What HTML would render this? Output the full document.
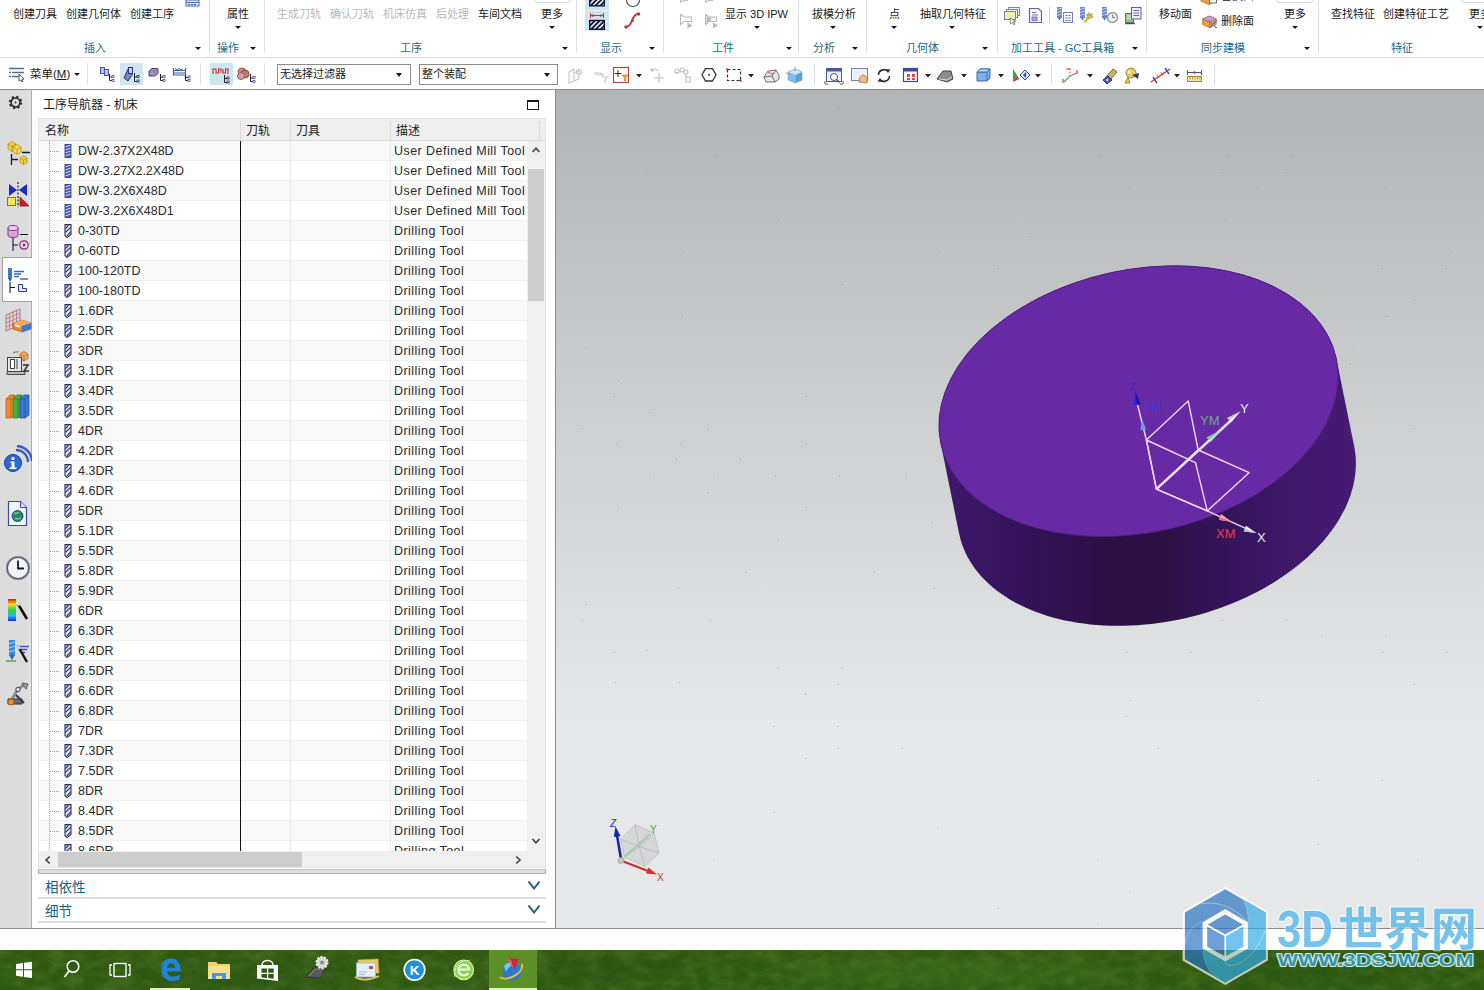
<!DOCTYPE html>
<html lang="zh-CN"><head><meta charset="utf-8"><title>NX - 工序导航器</title>
<style>
html,body{margin:0;padding:0}
body{width:1484px;height:990px;overflow:hidden;background:#fff;position:relative;font-family:"Liberation Sans","Noto Sans CJK SC",sans-serif;font-size:12px;color:#1a1a1a}
div,span,i{box-sizing:border-box}
.abs{position:absolute}
/* ribbon */
#ribbon{position:absolute;left:0;top:0;width:1484px;height:58px;background:#fff;border-bottom:1px solid #dcdcdc}
#ribbon .t{position:absolute;top:6px;font-size:11px;line-height:16px;white-space:nowrap;color:#1a1a1a}
#ribbon .t.dis{color:#b8b8b8}
#ribbon .g{position:absolute;top:40px;font-size:11px;line-height:16px;white-space:nowrap;color:#1b6a87}
#ribbon .sep{position:absolute;top:0;width:1px;height:53px;background:#dedede}
#ribbon .ar{position:absolute;width:0;height:0;border-left:3px solid transparent;border-right:3px solid transparent;border-top:3.5px solid #1a1a1a}
/* toolbar */
#tb{position:absolute;left:0;top:59px;width:1484px;height:30px;background:#fff}
#tb .t{position:absolute;font-size:11px;line-height:16px;white-space:nowrap}
#tb .box{position:absolute;top:5px;height:21px;border:1px solid #8c8c8c;background:#fff;font-size:11px;line-height:18px;padding-left:2px;white-space:nowrap}
#tb .ar{position:absolute;width:0;height:0;border-left:3.5px solid transparent;border-right:3.5px solid transparent;border-top:4px solid #1a1a1a}
#tb .sep{position:absolute;top:4px;width:1px;height:22px;background:#dedede}
#tb .hl{position:absolute;background:#cde6f0}
#tb svg{position:absolute}
#topline{position:absolute;left:0;top:89px;width:1484px;height:1px;background:#8e8e8e}
/* sidebar */
#side{position:absolute;left:0;top:90px;width:32px;height:838px;background:linear-gradient(90deg,#dcdcdc 0,#dcdcdc 26px,#e0e0e0 28px,#e0e0e0 31px);border-right:1px solid #adadad}
#side svg{position:absolute}
#side .act{position:absolute;left:2px;top:167px;width:30px;height:45px;background:#fff;border:1px solid #a0a0a0;border-right:none}
/* nav */
#nav{position:absolute;left:32px;top:90px;width:523px;height:838px;background:#fff}
#nav .ntitle{position:absolute;left:11px;top:7px;font-size:12px;line-height:16px;color:#1a1a1a}
#nav .nmax{position:absolute;left:495px;top:10px;width:12px;height:10px;border:1px solid #1a1a1a;border-top-width:2px}
#tbl{position:absolute;left:6px;top:28px;width:508px;height:750px;border:1px solid #e3e3e3;background:#fff;overflow:hidden}
.thead{position:absolute;left:0;top:0;width:506px;height:22px;background:#efefef;border-bottom:1px solid #dadada;font-size:12px;line-height:20px}
.thead span{position:absolute;top:2px;height:20px;border-left:1px solid #d9d9d9;padding-left:5px}
.thead .h1{left:0;width:201px;border-left:none;padding-left:6px}
.thead .h2{left:201px;width:50px}
.thead .h3{left:251px;width:100px}
.thead .h4{left:351px;width:150px;border-right:1px solid #d9d9d9}
.tbody{position:absolute;left:0;top:22px;width:488px;height:710px;overflow:hidden}
.row{position:relative;height:20px;width:488px;border-bottom:1px solid #efefef;font-size:12.5px;line-height:21px;white-space:nowrap;background:#fff;color:#2b2b2b}
.row.alt{background:#f9f9f9}
.row .dots{position:absolute;left:11px;top:10px;width:10px;height:1px;background-image:linear-gradient(90deg,#a0a0a0 1px,transparent 1px);background-size:2px 1px}
.row .ti{position:absolute;left:25px;top:3px;width:8px;height:14px}
.row .nm{position:absolute;left:39px;top:0}
.row .ds{position:absolute;left:355px;top:0;letter-spacing:0.45px}
.treeline{position:absolute;left:10px;top:0;width:1px;height:710px;background-image:linear-gradient(180deg,#a0a0a0 1px,transparent 1px);background-size:1px 2px}
.c1{position:absolute;left:200.5px;top:0;width:1.5px;height:710px;background:#111}
.c2{position:absolute;left:251px;top:0;width:1px;height:710px;background:#e9eaef}
.c3{position:absolute;left:351px;top:0;width:1px;height:710px;background:#e9eaef}
.vscroll{position:absolute;left:488px;top:22px;width:18px;height:710px;background:#f0f0f0}
.vscroll svg,.hscroll svg{position:absolute;width:10px;height:10px}
.vup svg{left:4px;top:4px}
.vdn svg{left:4px;top:695px}
.vthumb{position:absolute;left:1px;top:28px;width:16px;height:132px;background:#cdcdcd}
.hscroll{position:absolute;left:0;top:732px;width:506px;height:17px;background:#f0f0f0}
.hl svg{left:4px;top:4px}
.hr svg{left:474px;top:4px}
.hthumb{position:absolute;left:19px;top:1px;width:244px;height:15px;background:#cdcdcd}
.gbar{position:absolute;left:6px;top:779px;width:508px;height:5px;background:#dcdcdc;border:1px solid #b4b4b4;border-top-color:#c4c4c4}
.sec{position:absolute;left:6px;width:508px;height:24px;border-bottom:2px solid #dcdcdc;font-size:13.5px;line-height:25px;color:#17627a}
.sec span{position:absolute;left:7px;top:0}
.sec svg{position:absolute;left:489px;top:5px;width:14px;height:10px}
.s1{top:785px}.s2{top:809px}
/* viewport */
#vp{position:absolute;left:555px;top:90px;width:929px;height:839px;overflow:hidden;background:linear-gradient(180deg,#b3b4b6 0%,#e6e7e9 75.1%,#e6e7e9 100%)}
#vp svg{position:absolute;left:0;top:0}
#vpl{position:absolute;left:555px;top:90px;width:1px;height:839px;background:#8c8c8c}
#vpb{position:absolute;left:0;top:928px;width:1484px;height:1px;background:#8c8c8c}
/* bottom */
#strip{position:absolute;left:0;top:929px;width:1484px;height:21px;background:#fff}
#task{position:absolute;left:0;top:950px;width:1484px;height:40px;background:#2f5515;overflow:hidden}
#task svg{position:absolute}
#wm{position:absolute;left:0;top:0}

</style></head>
<body>
<svg width="0" height="0" style="position:absolute">
<defs>
<symbol id="icMill" viewBox="0 0 8 14"><rect x="1" y="0.5" width="6" height="13" fill="#4a5aa8"/><path d="M1 3 L7 1 M1 6 L7 4 M1 9 L7 7 M1 12 L7 10" stroke="#c8d0f0" stroke-width="1.1"/><rect x="1" y="0.5" width="6" height="13" fill="none" stroke="#2c3580" stroke-width="0.8"/></symbol>
<symbol id="icDrill" viewBox="0 0 8 14"><path d="M1 0.6 H7 V10.5 L3 13.6 L1 11.5 Z" fill="#e8ebf6" stroke="#2a2f55" stroke-width="1.1"/><path d="M1.2 8.5 L6.8 3.2 M1.2 4.8 L4.5 1.2 M3 12 L6.8 7.6" stroke="#3a4380" stroke-width="1.3"/></symbol>
</defs></svg>
<div id="ribbon">
  <span class="t" style="left:13px">创建刀具</span>
  <span class="t" style="left:66px">创建几何体</span>
  <span class="t" style="left:130px">创建工序</span>
  <svg class="abs" style="left:185px;top:0" width="16" height="8" viewBox="0 0 16 8"><rect x="1" y="0" width="13" height="6" fill="#dfeaf6" stroke="#3f6fb0" stroke-width="1"/><path d="M1 2.5 H14 M3 4.5 h2 m1 0 h2 m1 0 h2" stroke="#3f6fb0" stroke-width="1"/></svg>
  <div class="sep" style="left:209px"></div>
  <span class="t" style="left:227px">属性</span><i class="ar" style="left:235px;top:26px"></i>
  <div class="sep" style="left:264px"></div>
  <span class="t dis" style="left:277px">生成刀轨</span>
  <span class="t dis" style="left:330px">确认刀轨</span>
  <span class="t dis" style="left:383px">机床仿真</span>
  <span class="t dis" style="left:436px">后处理</span>
  <span class="t" style="left:478px">车间文档</span>
  <span class="t" style="left:541px">更多</span><i class="ar" style="left:549px;top:26px"></i>
  <div class="abs" style="left:534px;top:-6px;width:37px;height:9px;border:1px solid #d8d8d8;border-radius:3px"></div>
  <div class="sep" style="left:576px"></div>
  <!-- display icons -->
  <div class="abs" style="left:585px;top:-2px;width:24px;height:33px;background:#cfe6f1"></div>
  <div class="abs" style="left:585px;top:10px;width:24px;height:1px;background:#e8f3f8"></div>
  <svg class="abs" style="left:588px;top:0" width="18" height="30" viewBox="0 0 18 30">
    <defs><pattern id="hat" width="3.400" height="3.400" patternUnits="userSpaceOnUse" patternTransform="rotate(-45)"><rect width="3.400" height="3.400" fill="#15153a"/><rect width="3.400" height="1.500" fill="#fff"/></pattern></defs>
    <rect x="2" y="-1" width="14" height="6.500" fill="url(#hat)"/><rect x="1.700" y="-2" width="14.600" height="7.800" fill="none" stroke="#15153a" stroke-width="1.400"/>
    <rect x="2" y="20.500" width="14" height="8.500" fill="url(#hat)"/><rect x="1.700" y="20.500" width="14.600" height="8.800" fill="none" stroke="#15153a" stroke-width="1.400"/>
    <path d="M2.5 13 V18 M15.5 13 V18 M3 15.5 H15" stroke="#d03030" stroke-width="1" fill="none"/><path d="M3 15.5 l2.5 -1.8 v3.6z M15 15.5 l-2.5 -1.8 v3.6z" fill="#d03030"/>
  </svg>
  <svg class="abs" style="left:622px;top:-6px" width="22" height="40" viewBox="0 0 22 40">
    <circle cx="11" cy="6" r="6.5" fill="#fff" stroke="#555" stroke-width="1.2"/><path d="M11 6 L13 3" stroke="#555" stroke-width="1"/>
    <path d="M4 33 C11 33 9 20 16 20" fill="none" stroke="#c0393b" stroke-width="1.900"/><circle cx="4" cy="33" r="1.800" fill="#c0393b"/><circle cx="16.500" cy="20" r="1.800" fill="#c0393b"/><circle cx="10.500" cy="26.500" r="1.500" fill="#c0393b"/>
  </svg>
  <div class="sep" style="left:663px"></div>
  <svg class="abs" style="left:676px;top:0" width="46" height="30" viewBox="0 0 46 30">
    <g fill="none" stroke="#b9b9b9" stroke-width="1.100"><path d="M4.500 -3 V2 L8 0.500 H11.500 V-3"/><path d="M29.500 -3 V2 L33 0.500 H36.500 V-3"/>
    <path d="M4.500 14.500 L8 17 H15.500 V21.500 H8 L4.500 24.500 Z"/><path d="M12 23.500 l3.500 2 l-3.500 2z" fill="#b9b9b9"/>
    <path d="M29.500 14.500 L33 17 H40.500 V21.500 H33 L29.500 24.500 Z M31.500 17 V22 M34 17.500 V21"/><path d="M31 17.500 l4 1.800 l-4 1.800z" fill="#b9b9b9"/><path d="M37.500 23.500 l3.500 2 l-3.500 2z" fill="#b9b9b9"/></g>
  </svg>
  <span class="t" style="left:725px">显示 3D IPW</span><i class="ar" style="left:754px;top:26px"></i>
  <div class="sep" style="left:798px"></div>
  <span class="t" style="left:812px">拔模分析</span><i class="ar" style="left:830px;top:26px"></i>
  <div class="sep" style="left:866px"></div>
  <span class="t" style="left:889px">点</span><i class="ar" style="left:891px;top:26px"></i>
  <span class="t" style="left:920px">抽取几何特征</span><i class="ar" style="left:949px;top:26px"></i>
  <div class="sep" style="left:997px"></div>
  <!-- GC toolbox icons -->
  <svg class="abs" style="left:1002px;top:6px" width="142" height="22" viewBox="0 0 142 22">
    <g stroke="#7a80b0" stroke-width="1" fill="#f0f2fa"><rect x="6.500" y="1.500" width="11" height="8"/><rect x="4.500" y="3.500" width="11" height="8"/><rect x="2.500" y="5.500" width="11" height="8" fill="#f4ecb0"/><path d="M8 12 l0.500 6 l1.800 -1.800 l1.700 2.600 l1 -0.700 l-1.600 -2.500 l2.300 -0.300z" fill="#fff" stroke="#555" stroke-width="0.700"/></g>
    <g stroke="#6a62b0" stroke-width="1.200" fill="#f6f5fc"><path d="M27.500 2.500 h9 l3 3 v11 h-12z"/><path d="M30 6.500 h4 M30 9 h6" stroke-width="0.900"/><rect x="30" y="11" width="5" height="3.500" fill="#b0a8e0" stroke-width="0.800"/></g>
    <path d="M47.500 1 V18" stroke="#d4d4d4"/>
    <g><rect x="55" y="1" width="5" height="11" fill="#6f86c4"/><path d="M55 3.500 l5 -1.500 M55 6.500 l5 -1.500 M55 9.500 l5 -1.500" stroke="#c0d0f4" stroke-width="0.900"/><path d="M56 12 l1.500 2.500 l1.500 -2.500z" fill="#506aa8"/><rect x="61.500" y="6.500" width="9" height="10" fill="#f4f6fc" stroke="#7a80b0"/><path d="M63.500 9.500 h2 m1 0 h2 M63.500 12 h2 m1 0 h2 M63.500 14.500 h2 m1 0 h2" stroke="#6a70a8" stroke-width="1"/></g>
    <g><rect x="78" y="1" width="5" height="11" fill="#6f86c4"/><path d="M78 3.500 l5 -1.500 M78 6.500 l5 -1.500 M78 9.500 l5 -1.500" stroke="#c0d0f4" stroke-width="0.900"/><path d="M79 12 l1.500 2.500 l1.500 -2.500z" fill="#506aa8"/><path d="M83 15.500 l6.500 -7" stroke="#e0b84a" stroke-width="2.600" stroke-linecap="round"/><path d="M87 6.500 a3 3 0 1 0 4 4 l-2.500 -0.500 l-0.800 -2.500z" fill="#e8c860" stroke="#b08a20" stroke-width="0.600"/><path d="M84 9 h4 M85 11.500 h-1" stroke="#7a80b0" stroke-width="0.800"/></g>
    <g><rect x="100" y="1" width="5" height="11" fill="#6f86c4"/><path d="M100 3.500 l5 -1.500 M100 6.500 l5 -1.500 M100 9.500 l5 -1.500" stroke="#c0d0f4" stroke-width="0.900"/><path d="M101 12 l1.500 2.500 l1.500 -2.500z" fill="#506aa8"/><circle cx="110.500" cy="11.500" r="5" fill="#f0f0f0" stroke="#9a9a9a" stroke-width="1.500"/><path d="M110.500 8.500 v3 h2.500" stroke="#777" fill="none" stroke-width="1"/></g>
    <g><path d="M123.500 7.500 h8 v9 h-8z" fill="#9cc09c" stroke="#5a7a5a"/><path d="M125 10 h5 M125 12.500 h5" stroke="#e8f4e8"/><path d="M123 17.500 h10" stroke="#4a5a4a" stroke-width="1.400"/><rect x="129.500" y="1.500" width="9.500" height="11.500" fill="#eceffb" stroke="#5a60a8"/><path d="M131.500 4.500 h5.500 M131.500 7 h5.500 M131.500 9.500 h5.500" stroke="#5a60a8" stroke-width="0.900"/></g>
  </svg>
  <div class="sep" style="left:1146px"></div>
  <span class="t" style="left:1159px">移动面</span>
  <span class="t" style="left:1221px;top:-12px">替换面</span>
  <span class="t" style="left:1221px;top:13px">删除面</span>
  <svg class="abs" style="left:1199px;top:-8px" width="22" height="40" viewBox="0 0 22 40">
    <path d="M2 2 l8 -3 l8 3 v7 l-8 3.500 l-8 -3.500z" fill="#eaa040" stroke="#a86a18" stroke-width="0.800"/><path d="M2 2 l8 3.500 l8 -3.500" fill="none" stroke="#a86a18" stroke-width="0.800"/><rect x="10.500" y="5" width="7" height="6" fill="#f4f4f4" stroke="#666" stroke-width="0.900"/>
    <g transform="translate(1.500 4.500) scale(0.850)"><path d="M2.500 26.500 l8 -3.500 l8 3.500 v6.500 l-8 3.500 l-8 -3.500z" fill="#eaa040" stroke="#a86a18" stroke-width="0.800"/><path d="M2.500 26.500 l8 -3.500 l8 3.500 l-8 3.500z" fill="#c8a0d8" stroke="#8a5aa0" stroke-width="0.800"/><path d="M10.500 30 v6.500" stroke="#a86a18" stroke-width="0.800"/><path d="M10 28 l9 9 M19 28 l-8 9" stroke="#6a6a8a" stroke-width="1.500"/><path d="M11 28.500 l8 8" stroke="#e8e8f0" stroke-width="0.500"/></g>
  </svg>
  <span class="t" style="left:1284px">更多</span><i class="ar" style="left:1292px;top:26px"></i>
  <div class="abs" style="left:1276px;top:-6px;width:37px;height:9px;border:1px solid #d8d8d8;border-radius:3px"></div>
  <div class="sep" style="left:1318px"></div>
  <span class="t" style="left:1331px">查找特征</span>
  <span class="t" style="left:1383px">创建特征工艺</span>
  <span class="t" style="left:1469px">更多</span><i class="ar" style="left:1477px;top:26px"></i>
  <div class="abs" style="left:1461px;top:-6px;width:37px;height:9px;border:1px solid #d8d8d8;border-radius:3px"></div>
  <!-- group labels -->
  <span class="g" style="left:84px">插入</span><i class="ar" style="left:195px;top:47px"></i>
  <span class="g" style="left:217px">操作</span><i class="ar" style="left:250px;top:47px"></i>
  <span class="g" style="left:400px">工序</span><i class="ar" style="left:562px;top:47px"></i>
  <span class="g" style="left:600px">显示</span><i class="ar" style="left:649px;top:47px"></i>
  <span class="g" style="left:712px">工件</span><i class="ar" style="left:786px;top:47px"></i>
  <span class="g" style="left:813px">分析</span><i class="ar" style="left:852px;top:47px"></i>
  <span class="g" style="left:906px">几何体</span><i class="ar" style="left:982px;top:47px"></i>
  <span class="g" style="left:1011px">加工工具 - GC工具箱</span><i class="ar" style="left:1132px;top:47px"></i>
  <span class="g" style="left:1201px">同步建模</span><i class="ar" style="left:1304px;top:47px"></i>
  <span class="g" style="left:1391px">特征</span>
</div>
<div id="tb">
  <svg style="left:8px;top:7px" width="18" height="16" viewBox="0 0 18 16"><path d="M1 2.500 H16 M4 6.500 H16 M4 10.500 H13" stroke="#5a6a8a" stroke-width="1.4"/><path d="M1 6.500 h2 M1 10.500 h2" stroke="#5a6a8a" stroke-width="1.4"/><path d="M11 8 l5 5 l-2 0.500 l1 2 l-1.200 0.500 l-1 -2 l-1.800 1z" fill="#fff" stroke="#333" stroke-width="0.8"/></svg>
  <span class="t" style="left:30px;top:7px;font-size:11.500px">菜单(<u>M</u>)</span><i class="ar" style="left:74px;top:14px;border-left-width:3px;border-right-width:3px;border-top-width:3.500px"></i>
  <div class="sep" style="left:87px"></div>
  <div class="hl" style="left:120px;top:4px;width:23px;height:22px"></div>
  <div class="hl" style="left:210px;top:4px;width:23px;height:22px"></div>
  <svg style="left:97px;top:5px" width="100" height="22" viewBox="0 0 100 22">
    <g><rect x="3.500" y="3.500" width="4" height="6" fill="#b9c3ea" stroke="#4a57a0"/><rect x="7.500" y="5.500" width="4" height="6" fill="#b9c3ea" stroke="#4a57a0"/><path d="M12.500 10 V16.500 H15 M12.500 13 H15" stroke="#222" fill="none"/><rect x="15" y="11.500" width="2" height="2" fill="none" stroke="#4a57a0" stroke-width="0.800"/><rect x="15" y="15.500" width="2" height="2" fill="none" stroke="#4a57a0" stroke-width="0.800"/></g>
    <g><path d="M27 14 l4 -9 h4 v6 l-4 6z" fill="#7a86c8" stroke="#2a3070"/><rect x="31.500" y="3.500" width="4" height="6" fill="#c9cff0" stroke="#2a3070"/><path d="M37.500 9 V17.500 H40 M37.500 13 H40" stroke="#222" fill="none"/><rect x="40" y="11.500" width="2" height="2" fill="none" stroke="#2a3070" stroke-width="0.800"/><rect x="40" y="16" width="2" height="2" fill="none" stroke="#2a3070" stroke-width="0.800"/></g>
    <g><path d="M52 7 l3 -2.500 h6 v5 l-3 2.500 h-6z" fill="#8d9ad8" stroke="#6a3a5a"/><path d="M52 7 h6 l3 -2.500 M58 7 v5" stroke="#b06a7a" fill="none"/><path d="M63.500 10 V16.500 H66 M63.500 13 H66" stroke="#222" fill="none"/><rect x="66" y="11.500" width="2" height="2" fill="none" stroke="#4a57a0" stroke-width="0.800"/><rect x="66" y="15.500" width="2" height="2" fill="none" stroke="#4a57a0" stroke-width="0.800"/></g>
    <g><path d="M76.500 4 v7 h12 v-7 M76.500 6.500 h12 M76.500 9 h12" fill="none" stroke="#3f5fa8" stroke-width="1.200"/><path d="M78 4.500 l2 1.500 l2 -1.500 l2 1.500 l2 -1.500" stroke="#3f5fa8" fill="none"/><path d="M88.500 11 V16.500 H91 M88.500 13.500 H91" stroke="#222" fill="none"/><rect x="91" y="12" width="2" height="2" fill="none" stroke="#4a57a0" stroke-width="0.800"/><rect x="91" y="15.500" width="2" height="2" fill="none" stroke="#4a57a0" stroke-width="0.800"/></g>
  </svg>
  <div class="sep" style="left:200px"></div>
  <svg style="left:210px;top:5px" width="48" height="22" viewBox="0 0 48 22">
    <path d="M3 10 V5 H6 V9 H8.500 V5 H11 V9 M13 5 V9 H15.500 V5 H18 V10" fill="none" stroke="#c03030" stroke-width="1.100"/><path d="M14.500 11 V18.500 H17 M14.500 14.500 H17" stroke="#222" fill="none"/><rect x="17" y="13" width="2" height="2" fill="none" stroke="#2a3070" stroke-width="0.800"/><rect x="17" y="17" width="2" height="2" fill="none" stroke="#2a3070" stroke-width="0.800"/>
    <g><circle cx="32" cy="8" r="4" fill="#c98a8a" stroke="#9a5a5a"/><circle cx="35" cy="10" r="4" fill="#b97a7a" stroke="#8a4a4a"/><circle cx="31" cy="12" r="3.500" fill="#d4a0a0" stroke="#9a5a5a"/><path d="M40.500 10 V17.500 H43 M40.500 14 H43" stroke="#222" fill="none"/><rect x="43" y="12.500" width="2" height="2" fill="none" stroke="#4a57a0" stroke-width="0.800"/><rect x="43" y="16.500" width="2" height="2" fill="none" stroke="#4a57a0" stroke-width="0.800"/></g>
  </svg>
  <div class="sep" style="left:264px"></div>
  <div class="box" style="left:277px;width:134px">无选择过滤器</div><i class="ar" style="left:396px;top:14px"></i>
  <div class="box" style="left:419px;width:139px">整个装配</div><i class="ar" style="left:544px;top:14px"></i>
  <!-- selection icons -->
  <svg style="left:564px;top:5px" width="250" height="24" viewBox="0 0 250 24">
    <g fill="none" stroke="#c4c4c4" stroke-width="1.100"><path d="M5 8 l5 -3 v12 l-5 2z M10 9 l5 -2 v8 l-5 2"/><circle cx="15" cy="8" r="2.500"/></g>
    <g fill="none" stroke="#c4c4c4" stroke-width="1.100"><path d="M31 9 h6 l2 2 h-6z M38 13 h5 l-2 4 v2"/></g>
    <rect x="49.500" y="3.500" width="15" height="15" fill="#fff" stroke="#b04848" stroke-width="1.200"/><path d="M54 6 v7 M50.500 9.500 h7" stroke="#333" stroke-width="1"/><path d="M58 11 h6 l-2.300 3 v3 h-1.400 v-3z" fill="#f0a828" stroke="#c07a10" stroke-width="0.600"/>
    <path d="M72 10 l3 3.500 l3 -3.500z" fill="#222"/>
    <g fill="none" stroke="#bdbdbd" stroke-width="1.100"><path d="M87 7 a4 4 0 0 1 7 0 M87 7 l0 -3 M87 7 l3 0"/><path d="M95 9 v10 M90 14 h10"/></g>
    <g fill="none" stroke="#bdbdbd" stroke-width="1.100"><circle cx="113" cy="7" r="2"/><circle cx="118" cy="6" r="2"/><circle cx="122" cy="8" r="2"/><path d="M122 10 v8 M122 13 h4 v5 h-4"/></g>
    <path d="M138 10.800 L141.500 4.600 H148.500 L152 10.800 L148.500 17 H141.500 Z" fill="#fff" stroke="#333" stroke-width="1.300"/><circle cx="145" cy="10.800" r="1.100" fill="#b03030"/>
    <rect x="163.500" y="5.500" width="13" height="11" fill="none" stroke="#333" stroke-width="1.200" stroke-dasharray="3 2"/><circle cx="163.500" cy="5.500" r="1.200" fill="#b03030"/><circle cx="176.500" cy="16.500" r="1.200" fill="#b03030"/>
    <path d="M184 10 l3 3.500 l3 -3.500z" fill="#222"/>
    <g><path d="M200 13 l4 -6 l8 -1 l3 5 v4 l-4 3 h-9z" fill="#e6e6ee" stroke="#666" stroke-width="0.900"/><path d="M200 13 l8 -1 l3 6 M208 12 l4 -6" fill="none" stroke="#666" stroke-width="0.900"/><path d="M204 8.500 l6 1.500" stroke="#d06070" stroke-width="1"/></g>
    <g><path d="M224 8 l7 -3 l7 3 v8 l-7 3 l-7 -3z" fill="#7dbcf0" stroke="#6aa8e0" stroke-width="0.600"/><path d="M231 11 l7 -3 v8 l-7 3z" fill="#5a9fe0"/><path d="M224 8 l7 -3 l7 3 l-7 3z" fill="#cfe8fb" stroke="#8ac0f0" stroke-width="0.600"/><path d="M231 11 v8" stroke="#9fd0f8" stroke-width="0.600"/><path d="M231 3 v4 M222 9 l4 1" stroke="#d04040" stroke-width="0.800" stroke-dasharray="1.500 1"/></g>
  </svg>
  <div class="sep" style="left:814px"></div>
  <svg style="left:822px;top:5px" width="226" height="24" viewBox="0 0 226 24">
    <g><rect x="4.500" y="4.500" width="15" height="13" fill="#eef1fb" stroke="#4a57a0"/><rect x="4.500" y="4.500" width="15" height="3" fill="#4a57a0"/><circle cx="12" cy="13" r="3.500" fill="#fff" stroke="#555"/><path d="M14.500 15.500 l3 3" stroke="#555" stroke-width="1.500"/><path d="M3 17 v3 h3 M21 17 v3 h-3" stroke="#c03030" fill="none"/></g>
    <g><rect x="29.500" y="4.500" width="16" height="12" fill="#eef1fb" stroke="#7a7fa8"/><path d="M37 18 c0 -6 3 -7 4 -7 s3 1 4 3 v5z" fill="#e6c080" stroke="#a07a30" stroke-width="0.800"/></g>
    <g fill="none" stroke="#333" stroke-width="1.600"><path d="M56.500 11 a5.500 5.500 0 0 1 10 -3"/><path d="M67.500 12 a5.500 5.500 0 0 1 -10 3"/></g><path d="M64.500 5 l4 0.500 l-2.500 3.500z M59.500 18 l-4 -0.500 l2.500 -3.500z" fill="#333"/>
    <g><rect x="81.500" y="4.500" width="14" height="13" fill="#fff" stroke="#3a4a9a" stroke-width="1.200"/><rect x="81.500" y="4.500" width="14" height="3" fill="#3a4a9a"/><path d="M85 10 h3 v3 h-3z M90 10 h3 v3 h-3z M85 14 h3 v2 h-3z M90 14 h3 v2 h-3z" fill="#e04848"/></g>
    <path d="M103 10 l3 3.500 l3 -3.500z" fill="#222"/>
    <g><path d="M115 15 l6 -8 h8 l2 8 l-6 3z" fill="#8c8c8c" stroke="#444"/><path d="M117 15 l8 1 l5 -3" fill="none" stroke="#ddd"/></g>
    <path d="M139 10 l3 3.500 l3 -3.500z" fill="#222"/>
    <g><path d="M155 8 l3 -3 h10 v9 l-3 3 h-10z" fill="#7fb2ec" stroke="#3a6ab0"/><path d="M155 8 h10 v9 M165 8 l3 -3" fill="none" stroke="#3a6ab0"/><path d="M155 8 l3 -3 h10 l-3 3z" fill="#bcdcfa" stroke="#3a6ab0"/></g>
    <path d="M176 10 l3 3.500 l3 -3.500z" fill="#222"/>
    <g><path d="M191 5 l4 6 l-4 7z" fill="#38a048"/><path d="M191 18 l4 -7 l2 4z" fill="#d03838"/><path d="M198 11 l5 -5 l5 5 l-5 5z" fill="#dfe6f8" stroke="#3a4a9a"/><path d="M201 11 l3 -3 v6z" fill="#3a4a9a"/></g>
    <path d="M213 10 l3 3.500 l3 -3.500z" fill="#222"/>
  </svg>
  <div class="sep" style="left:1051px"></div>
  <svg style="left:1058px;top:5px" width="150" height="24" viewBox="0 0 150 24">
    <g fill="none" stroke-width="1.100"><path d="M12 4 v8" stroke="#d06060" stroke-dasharray="2 1.500"/><path d="M12 12 l7 -3" stroke="#d06060"/><path d="M12 12 l-6 6" stroke="#40a060"/><path d="M8 5 h4 M19 6 v4 M5 15 v4" stroke="#c04040"/></g>
    <path d="M29 10 l3 3.500 l3 -3.500z" fill="#222"/>
    <g><path d="M47 14 l8 -9 l4 3 l-8 9z" fill="#c8b46a" stroke="#7a6a2a"/><path d="M45 16 l5 -4 l4 4 l-5 4z" fill="#4a5ab0" stroke="#2a3070"/><path d="M48 16 l2 -1.500 v3z" fill="#fff"/></g>
    <g><circle cx="73" cy="9" r="5" fill="#e6c86a" stroke="#a88a2a"/><circle cx="71" cy="8" r="1.500" fill="#fff"/><path d="M70 13 l-3 6 h5z" fill="#e6c86a" stroke="#a88a2a"/><path d="M74 11 l7 -2 l-1 6z" fill="#3a3a6a"/></g>
    <g><path d="M93 18 L112 5" stroke="#d03a3a" stroke-width="1.300"/><path d="M95 13 l4 6 M107 4 l4 6" stroke="#3a4ab0" stroke-width="1.400"/><path d="M99 11 l2 3 M103 8.500 l2 3" stroke="#d03a3a"/></g>
    <path d="M116 10 l3 3.500 l3 -3.500z" fill="#222"/>
    <g><rect x="129.500" y="12.500" width="14" height="5" fill="#f6e6a8" stroke="#a88a2a"/><path d="M132 13 v2.500 M134.500 13 v2.500 M137 13 v2.500 M139.500 13 v2.500 M142 13 v2.500" stroke="#a88a2a" stroke-width="0.800"/><path d="M129.500 6 v5 M143.500 6 v5 M130 8.500 h13" stroke="#4a4a9a"/><circle cx="136.500" cy="8.500" r="1.200" fill="#c03030"/></g>
  </svg>
  <div class="sep" style="left:1214px"></div>
</div>
<div id="topline"></div>
<div id="side">
  <div class="act"></div>
  <!-- gear -->
  <svg style="left:7.500px;top:5px" width="15" height="15" viewBox="0 0 17 17"><circle cx="8.500" cy="8.500" r="5" fill="none" stroke="#222" stroke-width="1.700"/><circle cx="8.500" cy="8.500" r="6.600" fill="none" stroke="#222" stroke-width="2" stroke-dasharray="2.600 2.580"/><circle cx="8.500" cy="8.500" r="1" fill="#222"/></svg>
  <!-- yellow cubes -->
  <svg style="left:5px;top:49px" width="26" height="28" viewBox="0 0 26 28"><g stroke="#b08a10" stroke-width="0.700"><path d="M3 5 l4 -2.500 l4 2.500 v5 l-4 2.500 l-4 -2.500z" fill="#f2d23a"/><path d="M3 5 l4 2.500 l4 -2.500 M7 7.500 v5" fill="none"/><path d="M8 8 l4 -2.500 l4 2.500 v5 l-4 2.500 l-4 -2.500z" fill="#f6dc50"/><path d="M8 8 l4 2.500 l4 -2.500 M12 10.500 v5" fill="none"/><path d="M15 19 l3.500 -2 l3.500 2 v4.500 l-3.500 2 l-3.500 -2z" fill="#f2d23a"/><path d="M15 19 l3.500 2 l3.500 -2 M18.500 21 v4.500" fill="none"/></g><path d="M6.500 15 V26 M6.500 20.500 H13 M17 13.500 H25" fill="none" stroke="#1a1a1a" stroke-width="1.300"/></svg>
  <!-- bowtie -->
  <svg style="left:5px;top:91px" width="26" height="28" viewBox="0 0 26 28"><path d="M4 3 l8 6 l-8 6z M22 3 l-8 6 l8 6z" fill="#1a2ac8"/><path d="M13 1 V26" stroke="#222" stroke-width="1.200" stroke-dasharray="2 1.500"/><rect x="2.500" y="16.500" width="8" height="8" fill="#f6e65a" stroke="#8a7a10"/><path d="M15 16 l9 9 h-9z" fill="#d0202a" stroke="#801018" stroke-width="0.700"/></svg>
  <!-- pink cylinder -->
  <svg style="left:5px;top:133px" width="26" height="30" viewBox="0 0 26 30"><path d="M3 5 v7 a5 2.500 0 0 0 10 0 v-7" fill="#e6a0d8" stroke="#7a3a80"/><ellipse cx="8" cy="5" rx="5" ry="2.500" fill="#f4c8ec" stroke="#7a3a80"/><path d="M8 15 V28 M8 22 H13 M15 11.500 H23" stroke="#14143c" stroke-width="1.100" fill="none"/><circle cx="19" cy="22" r="4.200" fill="#f4d8ee" stroke="#8a2a6a" stroke-width="1.200"/><circle cx="19" cy="22" r="1.400" fill="#8a2a6a"/></svg>
  <!-- active: tool tree -->
  <svg style="left:5px;top:176px" width="26" height="30" viewBox="0 0 26 30"><rect x="3" y="2" width="4" height="10" fill="#3a7ad0"/><path d="M3 12 l2 4 l2 -4z" fill="#2a5aa0"/><path d="M9 5.500 h10 M9 8 h7 M9 10.500 h5" stroke="#3a6ac0" stroke-width="1.500"/><path d="M5 16 V27 M5 21.500 H10 M15 13 H23" stroke="#14143c" stroke-width="1.100" fill="none"/><path d="M13.500 18.500 h4 v4 h4 v3 h-8z" fill="#e8ecfa" stroke="#2a3a9a"/></svg>
  <!-- machining grid -->
  <svg style="left:3px;top:216px" width="30" height="30" viewBox="0 0 30 30"><path d="M3 9 l14 -6 v16 l-14 6z" fill="#f1d0b8" stroke="#8a6a9a" stroke-width="0.800"/><path d="M3 13 l14 -6 M3 17 l14 -6 M3 21 l14 -6 M6.500 7.500 v16 M10 6 v16 M13.500 4.500 v16" stroke="#9a7ab0" stroke-width="0.800"/><path d="M10 17 l9 -3 l9 3 v6 l-9 3 l-9 -3z" fill="#f08a28" stroke="#b05a10" stroke-width="0.700"/><path d="M10 17 l9 3 l9 -3 l-9 -3z" fill="#f8b060"/><path d="M19 20 v6 l9 -3 v-6z" fill="#3a7ad8"/><path d="M12 18 l5 1.800 v2 l-5 -1.800z" fill="#f6f6f6"/></svg>
  <!-- machine -->
  <svg style="left:3px;top:258px" width="30" height="30" viewBox="0 0 30 30"><path d="M17 6 l4 -2.500 l4 2.500 v4.500 l-4 2.500 l-4 -2.500z" fill="#f2b060" stroke="#a86a18" stroke-width="0.800"/><path d="M17 6 l4 2.500 l4 -2.500 M21 8.500 v4.500" fill="none" stroke="#a86a18" stroke-width="0.800"/><path d="M10 5 a8 8 0 0 1 6 -1" fill="none" stroke="#e07030" stroke-width="1.200"/><rect x="4.500" y="9.500" width="14" height="14" fill="#e6e6ea" stroke="#444"/><rect x="7.500" y="11.500" width="4" height="9" fill="#fff" stroke="#444"/><path d="M14 11 v10" stroke="#444"/><path d="M4 23.500 h18 v3 h-18z" fill="#b8b8c0" stroke="#444"/><path d="M20 17 h5 l-4 6 h5" fill="none" stroke="#333" stroke-width="1.500"/></svg>
  <!-- books -->
  <svg style="left:3px;top:299px" width="30" height="32" viewBox="0 0 30 32"><path d="M3 10 l4 -4 h5 v20 l-4 3 h-5z" fill="#f08a28" stroke="#a85a10" stroke-width="0.700"/><path d="M3 10 h5 v19 M8 10 l4 -4" fill="none" stroke="#a85a10" stroke-width="0.700"/><path d="M10 10 l4 -4 h5 v20 l-4 3 h-5z" fill="#48b040" stroke="#2a7a28" stroke-width="0.700"/><path d="M10 10 h5 v19 M15 10 l4 -4" fill="none" stroke="#2a7a28" stroke-width="0.700"/><path d="M17 10 l4 -4 h5 v20 l-4 3 h-5z" fill="#3a78d8" stroke="#1a4a9a" stroke-width="0.700"/><path d="M17 10 h5 v19 M22 10 l4 -4" fill="none" stroke="#1a4a9a" stroke-width="0.700"/></svg>
  <!-- info -->
  <svg style="left:3px;top:355px" width="30" height="30" viewBox="0 0 30 30"><path d="M13 5 a12 12 0 0 1 12 12 M14 1 a16 16 0 0 1 15 15" fill="none" stroke="#3a5ac8" stroke-width="2.400"/><circle cx="10" cy="18" r="8.500" fill="#2a6ad8" stroke="#1a3a9a"/><circle cx="10" cy="13.500" r="1.600" fill="#fff"/><path d="M7.500 16.500 h4 v6 h2 v1.500 h-7 v-1.500 h2 v-4.500 h-1z" fill="#fff"/></svg>
  <!-- doc globe -->
  <svg style="left:6px;top:410px" width="24" height="28" viewBox="0 0 24 28"><path d="M2.500 1.500 h12 l6 6 v18 h-18z" fill="#f4f6fd" stroke="#3a4ab0" stroke-width="1.200"/><path d="M14.500 1.500 v6 h6" fill="#dfe4f8" stroke="#3a4ab0"/><circle cx="11.500" cy="16" r="5.500" fill="#2a8a50" stroke="#1a4a8a"/><path d="M8 14 c2 -2 4 0 5 -2 M9 19 c2 -1 3 1 6 -1" stroke="#6ac0f0" stroke-width="1.400" fill="none"/></svg>
  <!-- clock -->
  <svg style="left:5px;top:465px" width="26" height="26" viewBox="0 0 26 26"><circle cx="13" cy="13" r="11" fill="#f2f4f8" stroke="#5a6270" stroke-width="2"/><circle cx="13" cy="13" r="11.800" fill="none" stroke="#9aa2b0" stroke-width="0.800"/><path d="M13 5.500 V13.500 H19" fill="none" stroke="#1a1a2a" stroke-width="1.800"/></svg>
  <!-- rainbow -->
  <svg style="left:5px;top:506px" width="26" height="28" viewBox="0 0 26 28"><defs><linearGradient id="rb" x1="0" y1="0" x2="0" y2="1"><stop offset="0" stop-color="#e01818"/><stop offset="0.250" stop-color="#f8e020"/><stop offset="0.500" stop-color="#30d040"/><stop offset="0.750" stop-color="#20c0e0"/><stop offset="1" stop-color="#2030d0"/></linearGradient></defs><rect x="3" y="3" width="8" height="22" fill="url(#rb)"/><path d="M13 8 l9 15" stroke="#111" stroke-width="2.600"/><path d="M12 6 l2.500 3.500" stroke="#ddd" stroke-width="2.600"/></svg>
  <!-- tool w/ arrow -->
  <svg style="left:4px;top:548px" width="28" height="28" viewBox="0 0 28 28"><rect x="5" y="2" width="6" height="15" fill="#3a8ad8"/><path d="M5 6 l6 -2 M5 10 l6 -2 M5 14 l6 -2" stroke="#a0d0f8"/><path d="M5 17 l3 5 l3 -5z" fill="#2a6ab0"/><path d="M13 8.500 h12 M15 11.500 h8 M17 14.500 h4" stroke="#3a5ab8" stroke-width="1.300"/><path d="M15 10 l8 14" stroke="#111" stroke-width="2.400"/><path d="M14 8 l2 3" stroke="#ddd" stroke-width="2.400"/><path d="M2 23 h10" stroke="#50a050" stroke-width="1.400"/></svg>
  <!-- robot wrench -->
  <svg style="left:4px;top:589px" width="28" height="28" viewBox="0 0 28 28"><path d="M8 20 l6 -10 l6 -4" fill="none" stroke="#8a8a92" stroke-width="3"/><path d="M18 4 l6 1 l-2 5z" fill="#a0a0a8" stroke="#444" stroke-width="0.800"/><circle cx="14" cy="10.500" r="2.200" fill="#d8d8e0" stroke="#444"/><path d="M4 20 h14 v5 h-14z" fill="#6a6a7a" stroke="#333"/><circle cx="7" cy="23" r="3" fill="#f08a28" stroke="#a85a10"/><path d="M12 16 l8 8" stroke="#3a3a4a" stroke-width="2.200"/></svg>
</div>

<div id="nav">
  <div class="ntitle">工序导航器 - 机床</div>
  <div class="nmax"></div>
  <div id="tbl">
    <div class="thead"><span class="h1">名称</span><span class="h2">刀轨</span><span class="h3">刀具</span><span class="h4">描述</span></div>
    <div class="tbody">
<div class="row alt"><i class="dots"></i><svg class="ti" viewBox="0 0 8 14"><use href="#icMill"/></svg><span class="nm">DW-2.37X2X48D</span><span class="ds">User Defined Mill Tool</span></div>
<div class="row"><i class="dots"></i><svg class="ti" viewBox="0 0 8 14"><use href="#icMill"/></svg><span class="nm">DW-3.27X2.2X48D</span><span class="ds">User Defined Mill Tool</span></div>
<div class="row alt"><i class="dots"></i><svg class="ti" viewBox="0 0 8 14"><use href="#icMill"/></svg><span class="nm">DW-3.2X6X48D</span><span class="ds">User Defined Mill Tool</span></div>
<div class="row"><i class="dots"></i><svg class="ti" viewBox="0 0 8 14"><use href="#icMill"/></svg><span class="nm">DW-3.2X6X48D1</span><span class="ds">User Defined Mill Tool</span></div>
<div class="row alt"><i class="dots"></i><svg class="ti" viewBox="0 0 8 14"><use href="#icDrill"/></svg><span class="nm">0-30TD</span><span class="ds">Drilling Tool</span></div>
<div class="row"><i class="dots"></i><svg class="ti" viewBox="0 0 8 14"><use href="#icDrill"/></svg><span class="nm">0-60TD</span><span class="ds">Drilling Tool</span></div>
<div class="row alt"><i class="dots"></i><svg class="ti" viewBox="0 0 8 14"><use href="#icDrill"/></svg><span class="nm">100-120TD</span><span class="ds">Drilling Tool</span></div>
<div class="row"><i class="dots"></i><svg class="ti" viewBox="0 0 8 14"><use href="#icDrill"/></svg><span class="nm">100-180TD</span><span class="ds">Drilling Tool</span></div>
<div class="row alt"><i class="dots"></i><svg class="ti" viewBox="0 0 8 14"><use href="#icDrill"/></svg><span class="nm">1.6DR</span><span class="ds">Drilling Tool</span></div>
<div class="row"><i class="dots"></i><svg class="ti" viewBox="0 0 8 14"><use href="#icDrill"/></svg><span class="nm">2.5DR</span><span class="ds">Drilling Tool</span></div>
<div class="row alt"><i class="dots"></i><svg class="ti" viewBox="0 0 8 14"><use href="#icDrill"/></svg><span class="nm">3DR</span><span class="ds">Drilling Tool</span></div>
<div class="row"><i class="dots"></i><svg class="ti" viewBox="0 0 8 14"><use href="#icDrill"/></svg><span class="nm">3.1DR</span><span class="ds">Drilling Tool</span></div>
<div class="row alt"><i class="dots"></i><svg class="ti" viewBox="0 0 8 14"><use href="#icDrill"/></svg><span class="nm">3.4DR</span><span class="ds">Drilling Tool</span></div>
<div class="row"><i class="dots"></i><svg class="ti" viewBox="0 0 8 14"><use href="#icDrill"/></svg><span class="nm">3.5DR</span><span class="ds">Drilling Tool</span></div>
<div class="row alt"><i class="dots"></i><svg class="ti" viewBox="0 0 8 14"><use href="#icDrill"/></svg><span class="nm">4DR</span><span class="ds">Drilling Tool</span></div>
<div class="row"><i class="dots"></i><svg class="ti" viewBox="0 0 8 14"><use href="#icDrill"/></svg><span class="nm">4.2DR</span><span class="ds">Drilling Tool</span></div>
<div class="row alt"><i class="dots"></i><svg class="ti" viewBox="0 0 8 14"><use href="#icDrill"/></svg><span class="nm">4.3DR</span><span class="ds">Drilling Tool</span></div>
<div class="row"><i class="dots"></i><svg class="ti" viewBox="0 0 8 14"><use href="#icDrill"/></svg><span class="nm">4.6DR</span><span class="ds">Drilling Tool</span></div>
<div class="row alt"><i class="dots"></i><svg class="ti" viewBox="0 0 8 14"><use href="#icDrill"/></svg><span class="nm">5DR</span><span class="ds">Drilling Tool</span></div>
<div class="row"><i class="dots"></i><svg class="ti" viewBox="0 0 8 14"><use href="#icDrill"/></svg><span class="nm">5.1DR</span><span class="ds">Drilling Tool</span></div>
<div class="row alt"><i class="dots"></i><svg class="ti" viewBox="0 0 8 14"><use href="#icDrill"/></svg><span class="nm">5.5DR</span><span class="ds">Drilling Tool</span></div>
<div class="row"><i class="dots"></i><svg class="ti" viewBox="0 0 8 14"><use href="#icDrill"/></svg><span class="nm">5.8DR</span><span class="ds">Drilling Tool</span></div>
<div class="row alt"><i class="dots"></i><svg class="ti" viewBox="0 0 8 14"><use href="#icDrill"/></svg><span class="nm">5.9DR</span><span class="ds">Drilling Tool</span></div>
<div class="row"><i class="dots"></i><svg class="ti" viewBox="0 0 8 14"><use href="#icDrill"/></svg><span class="nm">6DR</span><span class="ds">Drilling Tool</span></div>
<div class="row alt"><i class="dots"></i><svg class="ti" viewBox="0 0 8 14"><use href="#icDrill"/></svg><span class="nm">6.3DR</span><span class="ds">Drilling Tool</span></div>
<div class="row"><i class="dots"></i><svg class="ti" viewBox="0 0 8 14"><use href="#icDrill"/></svg><span class="nm">6.4DR</span><span class="ds">Drilling Tool</span></div>
<div class="row alt"><i class="dots"></i><svg class="ti" viewBox="0 0 8 14"><use href="#icDrill"/></svg><span class="nm">6.5DR</span><span class="ds">Drilling Tool</span></div>
<div class="row"><i class="dots"></i><svg class="ti" viewBox="0 0 8 14"><use href="#icDrill"/></svg><span class="nm">6.6DR</span><span class="ds">Drilling Tool</span></div>
<div class="row alt"><i class="dots"></i><svg class="ti" viewBox="0 0 8 14"><use href="#icDrill"/></svg><span class="nm">6.8DR</span><span class="ds">Drilling Tool</span></div>
<div class="row"><i class="dots"></i><svg class="ti" viewBox="0 0 8 14"><use href="#icDrill"/></svg><span class="nm">7DR</span><span class="ds">Drilling Tool</span></div>
<div class="row alt"><i class="dots"></i><svg class="ti" viewBox="0 0 8 14"><use href="#icDrill"/></svg><span class="nm">7.3DR</span><span class="ds">Drilling Tool</span></div>
<div class="row"><i class="dots"></i><svg class="ti" viewBox="0 0 8 14"><use href="#icDrill"/></svg><span class="nm">7.5DR</span><span class="ds">Drilling Tool</span></div>
<div class="row alt"><i class="dots"></i><svg class="ti" viewBox="0 0 8 14"><use href="#icDrill"/></svg><span class="nm">8DR</span><span class="ds">Drilling Tool</span></div>
<div class="row"><i class="dots"></i><svg class="ti" viewBox="0 0 8 14"><use href="#icDrill"/></svg><span class="nm">8.4DR</span><span class="ds">Drilling Tool</span></div>
<div class="row alt"><i class="dots"></i><svg class="ti" viewBox="0 0 8 14"><use href="#icDrill"/></svg><span class="nm">8.5DR</span><span class="ds">Drilling Tool</span></div>
<div class="row"><i class="dots"></i><svg class="ti" viewBox="0 0 8 14"><use href="#icDrill"/></svg><span class="nm">8.6DR</span><span class="ds">Drilling Tool</span></div>
      <div class="treeline"></div>
      <div class="c1"></div><div class="c2"></div><div class="c3"></div>
    </div>
    <div class="vscroll"><div class="vup"><svg viewBox="0 0 10 10"><path d="M1.5 7 L5 3.2 L8.5 7" fill="none" stroke="#404040" stroke-width="1.6"/></svg></div><div class="vthumb"></div><div class="vdn"><svg viewBox="0 0 10 10"><path d="M1.5 3 L5 6.8 L8.5 3" fill="none" stroke="#404040" stroke-width="1.6"/></svg></div></div>
    <div class="hscroll"><div class="hl"><svg viewBox="0 0 10 10"><path d="M6.8 1.5 L3 5 L6.8 8.5" fill="none" stroke="#404040" stroke-width="1.6"/></svg></div><div class="hthumb"></div><div class="hr"><svg viewBox="0 0 10 10"><path d="M3.2 1.5 L7 5 L3.2 8.5" fill="none" stroke="#404040" stroke-width="1.6"/></svg></div></div>
  </div>
  <div class="gbar"></div>
  <div class="sec s1"><span>相依性</span><svg viewBox="0 0 14 10"><path d="M1.5 1.5 L7 8.5 L12.5 1.5" fill="none" stroke="#17627a" stroke-width="2"/></svg></div>
  <div class="sec s2"><span>细节</span><svg viewBox="0 0 14 10"><path d="M1.5 1.5 L7 8.5 L12.5 1.5" fill="none" stroke="#17627a" stroke-width="2"/></svg></div>
</div>
<div id="vp">
<svg width="929" height="839" viewBox="555 90 929 839">
<defs>
<linearGradient id="sideg" gradientUnits="userSpaceOnUse" x1="938" y1="0" x2="1356" y2="0">
<stop offset="0" stop-color="#3f186c"/><stop offset="0.2" stop-color="#33135a"/><stop offset="0.42" stop-color="#2a1044"/><stop offset="0.55" stop-color="#2c1147"/><stop offset="0.69" stop-color="#33145a"/><stop offset="0.83" stop-color="#3d1869"/><stop offset="1" stop-color="#461b74"/>
</linearGradient>
</defs>
<g fill="#707070" opacity="0.5"><rect x="614" y="396" width="1" height="1"/><rect x="650" y="412" width="1" height="1"/><rect x="582" y="428" width="1" height="1"/><rect x="708" y="428" width="1" height="1"/><rect x="617" y="444" width="1" height="1"/><rect x="681" y="444" width="1" height="1"/><rect x="806" y="443" width="1" height="1"/><rect x="676" y="459" width="1" height="1"/><rect x="740" y="459" width="1" height="1"/><rect x="650" y="476" width="1" height="1"/><rect x="775" y="475" width="1" height="1"/><rect x="839" y="475" width="1" height="1"/><rect x="708" y="492" width="1" height="1"/><rect x="806" y="507" width="1" height="1"/><rect x="931" y="522" width="1" height="1"/><rect x="647" y="650" width="1" height="1"/><rect x="615" y="682" width="1" height="1"/><rect x="679" y="682" width="1" height="1"/><rect x="805" y="693" width="1" height="1"/><rect x="805" y="694" width="1" height="1"/><rect x="773" y="726" width="1" height="1"/><rect x="837" y="726" width="1" height="1"/><rect x="805" y="758" width="1" height="1"/><rect x="714" y="156" width="1" height="1"/><rect x="586" y="348" width="1" height="1"/><rect x="682" y="252" width="1" height="1"/><rect x="618" y="380" width="1" height="1"/><rect x="682" y="316" width="1" height="1"/><rect x="778" y="220" width="1" height="1"/><rect x="618" y="508" width="1" height="1"/><rect x="842" y="284" width="1" height="1"/><rect x="586" y="604" width="1" height="1"/><rect x="714" y="476" width="1" height="1"/><rect x="938" y="252" width="1" height="1"/><rect x="1098" y="156" width="1" height="1"/><rect x="746" y="572" width="1" height="1"/><rect x="778" y="540" width="1" height="1"/><rect x="1130" y="188" width="1" height="1"/><rect x="906" y="476" width="1" height="1"/><rect x="1226" y="156" width="1" height="1"/><rect x="778" y="668" width="1" height="1"/><rect x="874" y="572" width="1" height="1"/><rect x="1002" y="444" width="1" height="1"/><rect x="1226" y="220" width="1" height="1"/><rect x="1258" y="188" width="1" height="1"/><rect x="1290" y="156" width="1" height="1"/><rect x="650" y="860" width="1" height="1"/><rect x="842" y="668" width="1" height="1"/><rect x="714" y="860" width="1" height="1"/><rect x="1034" y="540" width="1" height="1"/><rect x="1098" y="476" width="1" height="1"/><rect x="1386" y="188" width="1" height="1"/><rect x="1226" y="412" width="1" height="1"/><rect x="1098" y="604" width="1" height="1"/><rect x="1130" y="572" width="1" height="1"/><rect x="1194" y="508" width="1" height="1"/><rect x="1354" y="348" width="1" height="1"/><rect x="1386" y="316" width="1" height="1"/><rect x="1450" y="252" width="1" height="1"/><rect x="938" y="828" width="1" height="1"/><rect x="1290" y="476" width="1" height="1"/><rect x="1130" y="700" width="1" height="1"/><rect x="1226" y="604" width="1" height="1"/><rect x="1098" y="860" width="1" height="1"/><rect x="1258" y="700" width="1" height="1"/><rect x="1322" y="636" width="1" height="1"/><rect x="1098" y="924" width="1" height="1"/><rect x="1130" y="892" width="1" height="1"/><rect x="1386" y="636" width="1" height="1"/><rect x="1418" y="860" width="1" height="1"/><rect x="646" y="172" width="1" height="1"/><rect x="838" y="108" width="1" height="1"/><rect x="582" y="620" width="1" height="1"/><rect x="806" y="396" width="1" height="1"/><rect x="614" y="652" width="1" height="1"/><rect x="678" y="588" width="1" height="1"/><rect x="998" y="268" width="1" height="1"/><rect x="1030" y="236" width="1" height="1"/><rect x="710" y="620" width="1" height="1"/><rect x="1030" y="300" width="1" height="1"/><rect x="1126" y="268" width="1" height="1"/><rect x="1222" y="172" width="1" height="1"/><rect x="1030" y="428" width="1" height="1"/><rect x="1190" y="268" width="1" height="1"/><rect x="1286" y="172" width="1" height="1"/><rect x="838" y="684" width="1" height="1"/><rect x="934" y="588" width="1" height="1"/><rect x="1158" y="364" width="1" height="1"/><rect x="774" y="812" width="1" height="1"/><rect x="838" y="748" width="1" height="1"/><rect x="1030" y="556" width="1" height="1"/><rect x="1126" y="460" width="1" height="1"/><rect x="902" y="748" width="1" height="1"/><rect x="1382" y="268" width="1" height="1"/><rect x="1190" y="524" width="1" height="1"/><rect x="1222" y="492" width="1" height="1"/><rect x="1350" y="364" width="1" height="1"/><rect x="1414" y="300" width="1" height="1"/><rect x="1446" y="268" width="1" height="1"/><rect x="1126" y="652" width="1" height="1"/><rect x="1158" y="620" width="1" height="1"/><rect x="1126" y="716" width="1" height="1"/><rect x="1190" y="652" width="1" height="1"/><rect x="1222" y="620" width="1" height="1"/><rect x="1414" y="428" width="1" height="1"/><rect x="998" y="908" width="1" height="1"/><rect x="1158" y="748" width="1" height="1"/><rect x="1286" y="620" width="1" height="1"/><rect x="1382" y="652" width="1" height="1"/><rect x="1318" y="780" width="1" height="1"/><rect x="1414" y="684" width="1" height="1"/><rect x="1446" y="652" width="1" height="1"/><rect x="1318" y="844" width="1" height="1"/><rect x="1382" y="780" width="1" height="1"/></g>
<path d="M938.9 425.6 L939.0 421.0 L939.4 416.3 L940.0 411.6 L940.9 406.9 L942.0 402.1 L943.3 397.4 L944.9 392.7 L946.7 388.0 L948.7 383.3 L951.0 378.6 L953.5 374.0 L956.2 369.3 L959.1 364.8 L962.3 360.2 L965.7 355.8 L969.3 351.3 L973.1 347.0 L977.1 342.7 L981.3 338.4 L985.6 334.3 L990.2 330.2 L995.0 326.2 L999.9 322.3 L1005.0 318.5 L1010.3 314.9 L1015.7 311.3 L1021.2 307.8 L1026.9 304.4 L1032.8 301.2 L1038.8 298.0 L1044.9 295.0 L1051.1 292.2 L1057.4 289.4 L1063.8 286.8 L1070.3 284.4 L1076.9 282.0 L1083.6 279.9 L1090.3 277.8 L1097.1 276.0 L1103.9 274.2 L1110.8 272.7 L1117.7 271.3 L1124.7 270.0 L1131.6 268.9 L1138.6 268.0 L1145.6 267.2 L1152.5 266.6 L1159.5 266.1 L1166.4 265.9 L1173.3 265.7 L1180.1 265.8 L1186.9 266.0 L1193.6 266.4 L1200.3 266.9 L1206.9 267.6 L1213.4 268.5 L1219.8 269.5 L1226.1 270.7 L1232.3 272.1 L1238.4 273.6 L1244.4 275.3 L1250.3 277.1 L1256.0 279.0 L1261.5 281.2 L1266.9 283.4 L1272.2 285.8 L1277.3 288.4 L1282.2 291.1 L1287.0 293.9 L1291.6 296.8 L1295.9 299.9 L1300.1 303.1 L1304.1 306.4 L1307.9 309.9 L1311.5 313.4 L1314.9 317.1 L1318.1 320.8 L1321.0 324.7 L1323.7 328.6 L1326.2 332.7 L1328.5 336.8 L1330.5 341.0 L1332.3 345.2 L1333.9 349.6 L1335.2 354.0 L1336.3 358.4 L1354.6 448.4 L1355.2 453.0 L1355.7 457.6 L1355.9 462.2 L1355.8 466.9 L1355.5 471.6 L1355.0 476.3 L1354.2 481.0 L1353.2 485.8 L1351.9 490.5 L1350.5 495.3 L1348.7 500.0 L1346.8 504.7 L1344.6 509.4 L1342.1 514.1 L1339.5 518.8 L1336.6 523.4 L1333.5 528.0 L1330.2 532.5 L1326.7 537.0 L1323.0 541.4 L1319.0 545.8 L1314.9 550.1 L1310.6 554.3 L1306.1 558.4 L1301.4 562.5 L1296.5 566.5 L1291.5 570.3 L1286.3 574.1 L1280.9 577.8 L1275.4 581.4 L1269.8 584.8 L1264.0 588.2 L1258.0 591.4 L1252.0 594.5 L1245.8 597.4 L1239.6 600.3 L1233.2 603.0 L1226.7 605.5 L1220.2 608.0 L1213.5 610.3 L1206.8 612.4 L1200.1 614.4 L1193.3 616.2 L1186.4 617.9 L1179.5 619.4 L1172.6 620.8 L1165.6 622.0 L1158.7 623.0 L1151.7 623.9 L1144.8 624.6 L1137.9 625.2 L1130.9 625.6 L1124.1 625.8 L1117.2 625.8 L1110.4 625.7 L1103.7 625.5 L1097.0 625.0 L1090.4 624.4 L1083.9 623.6 L1077.5 622.7 L1071.1 621.6 L1064.9 620.4 L1058.8 619.0 L1052.8 617.4 L1046.9 615.7 L1041.2 613.8 L1035.6 611.8 L1030.1 609.6 L1024.8 607.3 L1019.7 604.8 L1014.7 602.2 L1009.9 599.4 L1005.3 596.6 L1000.9 593.5 L996.6 590.4 L992.6 587.2 L988.7 583.8 L985.1 580.3 L981.6 576.7 L978.4 573.0 L975.4 569.2 L972.6 565.3 L970.1 561.3 L967.7 557.2 L965.6 553.0 L963.8 548.8 L962.1 544.5 L960.7 540.1 L959.6 535.7 L958.6 531.2 L940.9 444.0 L940.0 439.4 L939.4 434.9 L939.0 430.3Z" fill="url(#sideg)"/>
<ellipse cx="1138.6" cy="401.2" rx="202.3" ry="131.5" transform="rotate(-12.2 1138.6 401.2)" fill="#6829a4" stroke="#4a1c7c" stroke-width="0.8"/>
<!-- WCS -->
<g fill="none" stroke="#efd8f1" stroke-width="1.4" stroke-linejoin="round">
<path d="M1156.4 489.1 L1146.4 440 L1188.2 400.9 L1198.2 450 Z"/>
<path d="M1156.4 489.1 L1146.4 440 L1195.5 462.7 L1207.3 510.9 Z"/>
<path d="M1156.4 489.1 L1198.2 450 L1249.1 472.7 L1207.3 510.9 Z"/>
<path d="M1146.4 440 L1137.6 405"/>
<path d="M1207.3 510.9 L1250 530.4"/>
</g>
<path d="M1156.4 489.1 L1232 419.5" stroke="#f1e4f3" stroke-width="2.4" fill="none"/>
<path d="M1135.300 391.500 L1140.400 404 L1134 405 Z" fill="#1010b0"/>
<path d="M1135.300 391.500 L1137.300 404.600 L1134 405 Z" fill="#2a2ad8"/>
<path d="M1142.300 419.500 L1146.300 429.500 L1140.300 430.200 Z" fill="#6a9ae0"/>
<path d="M1220.500 430.500 L1210.800 442 L1206.600 437.500 Z" fill="#b4e8cc"/>
<path d="M1220.500 430.500 L1208.800 439.800 L1206.600 437.500 Z" fill="#7cc8a4"/>
<path d="M1240.500 411.500 L1231.300 422.300 L1227.200 418 Z" fill="#f6f0f8"/>
<path d="M1240.500 411.500 L1229.300 420.200 L1227.200 418 Z" fill="#cfc4d4"/>
<path d="M1232 522 L1218.800 519.800 L1221 514 Z" fill="#f4a8b0"/>
<path d="M1232 522 L1218.800 519.800 L1219.800 517 Z" fill="#d87880"/>
<path d="M1256.500 533 L1243.800 531.600 L1246 525.800 Z" fill="#f2f2f6"/>
<path d="M1256.500 533 L1243.800 531.600 L1244.800 528.800 Z" fill="#b8b8c4"/>
<g font-family="'Liberation Sans',sans-serif" font-size="12">
<text x="1129" y="391" fill="#2828c8" font-size="11">Z</text>
<text x="1144" y="411" fill="#3a3ad8" font-size="12">ZM</text>
<text x="1200" y="425" fill="#6aa88a" font-size="13">YM</text>
<text x="1240" y="413" fill="#f0e6f2" font-size="13">Y</text>
<text x="1216" y="538" fill="#e83a4a" font-size="13">XM</text>
<text x="1257" y="542" fill="#eeeeee" font-size="13">X</text>
</g>
<!-- view triad -->
<g>
<path d="M635 824.600 L654 833 L659 852.800 L644.900 866.300 L624.400 857 L620.800 839.400 Z" fill="#cfd0d2" fill-opacity="0.7" stroke="#bcbdc0" stroke-width="0.800"/>
<path d="M639.200 846.500 L635 824.600 M639.200 846.500 L659 852.800 M639.200 846.500 L624.400 857 M639.200 846.500 L654 833 M639.200 846.500 L644.900 866.300 M639.200 846.500 L620.800 839.400" stroke="#b0b2b5" stroke-width="0.700" fill="none"/>
<path d="M621 860 L650 834" stroke="#9fd0a4" stroke-width="2.200" opacity="0.8"/>
<path d="M621 859 L617 835" stroke="#1428a8" stroke-width="2.600"/>
<path d="M615.500 826.500 L620.500 836 L613.800 837 Z" fill="#1428a8"/>
<path d="M622 861 L648 871" stroke="#cc3030" stroke-width="2.400"/>
<path d="M657 874.500 L646 873.500 L648.500 867.500 Z" fill="#d83030"/>
<circle cx="620.800" cy="860.600" r="3" fill="#c4c4c0" stroke="#a0a09a" stroke-width="0.600"/>
<g font-family="'Liberation Sans',sans-serif" font-size="10">
<text x="610" y="827" fill="#2030b8" font-style="italic">Z</text>
<text x="650" y="833" fill="#48a050">Y</text>
<text x="657" y="881" fill="#d03838">X</text>
</g>
</g>
</svg>
</div>
<div id="vpl"></div>
<div id="vpb"></div>
<div id="strip"></div>
<div id="task">
  <svg style="left:0;top:0" width="1484" height="40" viewBox="0 0 1484 40">
    <defs>
      <filter id="blur6" x="-20%" y="-50%" width="140%" height="200%"><feGaussianBlur stdDeviation="7"/></filter>
    </defs>
    <filter id="grass" x="0" y="0" width="100%" height="100%"><feTurbulence type="fractalNoise" baseFrequency="0.06 0.11" numOctaves="3" seed="4"/><feColorMatrix type="matrix" values="0 0 0 0 0.400  0 0 0 0 0.600  0 0 0 0 0.130  1.600 0 0 0 -0.620"/></filter>
    <filter id="grass2" x="0" y="0" width="100%" height="100%"><feTurbulence type="fractalNoise" baseFrequency="0.045 0.09" numOctaves="2" seed="9"/><feColorMatrix type="matrix" values="0 0 0 0 0.100  0 0 0 0 0.200  0 0 0 0 0.030  0 1.800 0 0 -0.700"/></filter>
    <rect width="1484" height="40" fill="#2e5810"/>
    <rect width="1484" height="40" filter="url(#grass)" opacity="0.220"/>
    <rect width="1484" height="40" filter="url(#grass2)" opacity="0.350"/>
    <g filter="url(#blur6)" opacity="0.350">
      <ellipse cx="620" cy="20" rx="80" ry="14" fill="#2a4f12"/><ellipse cx="950" cy="22" rx="160" ry="14" fill="#447528"/><ellipse cx="1320" cy="20" rx="100" ry="14" fill="#2c5214"/><ellipse cx="250" cy="25" rx="120" ry="12" fill="#2c5214"/>
    </g>
    <rect x="489" y="0" width="48" height="40" fill="#5c9129"/>
    <rect x="150" y="38" width="40" height="2" fill="#e2f6b4"/>
    <rect x="489" y="38" width="48" height="2" fill="#e2f6b4"/>
    <!-- windows -->
    <path d="M16 14 L23 13 V19.300 H16 Z M24 12.800 L32 11.700 V19.300 H24 Z M16 20.300 H23 V26.700 L16 25.700 Z M24 20.300 H32 V28 L24 26.900 Z" fill="#fff"/>
    <!-- search -->
    <circle cx="73" cy="16.500" r="5.800" fill="none" stroke="#fff" stroke-width="1.500"/><path d="M69 21 L64.500 27" stroke="#fff" stroke-width="1.700"/>
    <!-- task view -->
    <rect x="114" y="13.500" width="12" height="13" fill="none" stroke="#fff" stroke-width="1.400"/><path d="M112 15 h-2 v10 h2 M128 15 h2 v10 h-2" fill="none" stroke="#fff" stroke-width="1.300"/>
    <!-- edge -->
    <path d="M160.500 19 C161 12 166 8.500 171 8.500 C177 8.500 180.500 13 180.500 19.500 V21.500 H167 C167.300 25 170 26.600 173 26.600 C175.500 26.600 177.800 25.900 179.700 24.800 V29.300 C177.600 30.400 175 31 172 31 C165.500 31 161.500 26.800 161.500 21 C161.500 17.500 163.300 14.800 166 13.300 C163.500 14.300 161.500 16.300 160.500 19 Z M167.200 17.800 H175 C175 15 173.500 13.300 171.200 13.300 C169 13.300 167.500 15.200 167.200 17.800 Z" fill="#1f83dc"/>
    <!-- folder -->
    <path d="M208 12 h8 l2 2 h12 v15 h-22z" fill="#f4cf6a"/><path d="M208 16 h22 v13 h-22z" fill="#f9e08e"/><path d="M212 29 v-6 h14 v6 h-4 v-3 h-6 v3z" fill="#38a0ea"/>
    <!-- store -->
    <path d="M257 15 h21 v16 l-21 -2.500z" fill="#fff"/><path d="M262 15 c0 -6 11 -6 11 0" fill="none" stroke="#fff" stroke-width="1.400"/><path d="M261.500 18.500 h5.500 v4.300 h-5.500z M268.200 18.500 h5.500 v4.300 h-5.500z M261.500 24 h5.500 v4 l-5.500 -0.600z M268.200 24 h5.500 v4.800 l-5.500 -0.700z" fill="#2f5516"/>
    <!-- gear laptop -->
    <g><path d="M306 27 l8 -9 h12 l-6 10z" fill="#5a5a5a" stroke="#2a2a2a" stroke-width="0.800"/><path d="M309 26 l6 -7 h9" stroke="#8a8a8a" fill="none"/><circle cx="322" cy="12.500" r="5.500" fill="#d8d8d8" stroke="#f4f4f4" stroke-width="2" stroke-dasharray="2 1.400"/><circle cx="322" cy="12.500" r="2" fill="#8a8a8a"/></g>
    <!-- mail -->
    <g><path d="M358 10 l20 -1 l1 14 l-20 1z" fill="#e8c860" stroke="#c8a840" stroke-width="0.600"/><rect x="356.500" y="13" width="19" height="14" fill="#e4eefa" stroke="#9ab8d8" stroke-width="0.800"/><rect x="369" y="16" width="4" height="3" fill="#c85040"/><path d="M359 22 h8 M359 24.500 h6" stroke="#9ab8d8"/><path d="M355 27 c6 4 16 3 24 -1" fill="none" stroke="#e8c860" stroke-width="1.800"/></g>
    <!-- K -->
    <circle cx="414.500" cy="19.800" r="10.300" fill="#1f8fd6" stroke="#fff" stroke-width="1.600"/>
    <text x="414.700" y="24.600" font-family="'Liberation Sans',sans-serif" font-weight="bold" font-size="13.500" fill="#fff" text-anchor="middle">K</text>
    <!-- green e -->
    <circle cx="463.700" cy="19.800" r="9.800" fill="#8cd254" stroke="#c8f0a0" stroke-width="1.200"/><path d="M458.500 19.500 h10.500 c0 -6 -9.500 -6.500 -10.500 0 c-0.500 6 6.500 7.500 10 3.800" fill="none" stroke="#eefbe0" stroke-width="2.200"/><path d="M455 27 c-3 -8 6 -19 15 -16" fill="none" stroke="#d8f6b8" stroke-width="0.900"/>
    <!-- NX -->
    <g><circle cx="512" cy="21" r="9.500" fill="#2a7ad0"/><path d="M504 16 a9.500 9.500 0 0 1 14 -2 c-5 0 -10 3 -12 8z" fill="#7ac0f0"/><path d="M507 8 l12 1 l-5 11z" fill="#d02838"/><path d="M507 8 l7 12 l-3 -10z" fill="#f06070"/><path d="M500 27 c4 5 24 -2 22 -13" fill="none" stroke="#e8b838" stroke-width="2"/></g>
  </svg>
</div>
<!-- watermark -->
<svg id="wm" width="1484" height="990" viewBox="0 0 1484 990" style="pointer-events:none">
  <defs><clipPath id="hexclip"><polygon points="1225.2,889.2 1265.6,912.6 1265.6,959.1 1225.2,982.5 1184.9,959.2 1184.9,912.6"/></clipPath></defs>
  <g opacity="0.690">
    <polygon points="1225.2,886.6 1267.9,911.2 1267.9,960.5 1225.2,985.1 1182.6,960.5 1182.6,911.2" fill="#fff"/>
    <g clip-path="url(#hexclip)">
      <rect x="1180" y="885" width="92" height="102" fill="#2c74c4"/>
      <path d="M1241.100 896.700 C1247 905 1249 915 1247.800 924.400 L1247.800 946.700 L1203 950 C1203.500 958 1206 966 1211.100 973.300 L1225 985 L1270 960 L1270 910 Z" fill="#33ace6"/>
      <path d="M1200.500 904 C1215 901 1232 905 1246.500 921 M1265.500 930 C1258 950 1245 964 1231 965.500 C1228 965.800 1226 964 1225.500 962" fill="none" stroke="#fff" stroke-width="0.600" opacity="0.700"/>
      <path d="M1241.100 896.700 C1247 905 1249 915 1247.800 924.400 M1203.300 950 C1203.500 958 1206 966 1211.100 973.300 M1185 944 C1187 932 1194 924 1202 922" fill="none" stroke="#fff" stroke-width="0.500" opacity="0.600"/>
    </g>
    <polygon points="1225.2,909.1 1247.9,922.2 1247.9,948.4 1225.2,961.5 1202.6,948.4 1202.6,922.2" fill="#fff"/>
    <path d="M1225.200 914.400 L1242.800 924.400 L1225.200 934.400 L1207.800 924.400 Z" fill="#2c74c4"/>
    <path d="M1207.200 926.700 L1224.400 936.100 V956.100 L1207.200 946.700 Z" fill="#2c74c4"/>
    <path d="M1226.100 936.100 L1243.300 926.700 V946.700 L1226.100 956.100 Z" fill="#33ace6"/>
  </g>
  <g opacity="0.880" paint-order="stroke" stroke="#ffffff" stroke-opacity="0.650" stroke-width="2.600" stroke-linejoin="round">
  <text x="1277" y="946.800" font-family="'Liberation Sans',sans-serif" font-weight="bold" font-size="51" fill="#62bcec" textLength="56" lengthAdjust="spacingAndGlyphs">3D</text>
  <text x="1338" y="944.500" font-family="'Liberation Sans','Noto Sans CJK SC',sans-serif" font-weight="bold" font-size="46" fill="#62bcec" textLength="139" lengthAdjust="spacingAndGlyphs">世界网</text>
  </g>
  <text x="1277.500" y="966.300" font-family="'Liberation Sans',sans-serif" font-weight="bold" font-size="17" fill="#3595ad" stroke="#d4e8dc" stroke-width="2.200" paint-order="stroke" stroke-linejoin="round" textLength="196" lengthAdjust="spacingAndGlyphs">WWW.3DSJW.COM</text>
</svg>

</body></html>
